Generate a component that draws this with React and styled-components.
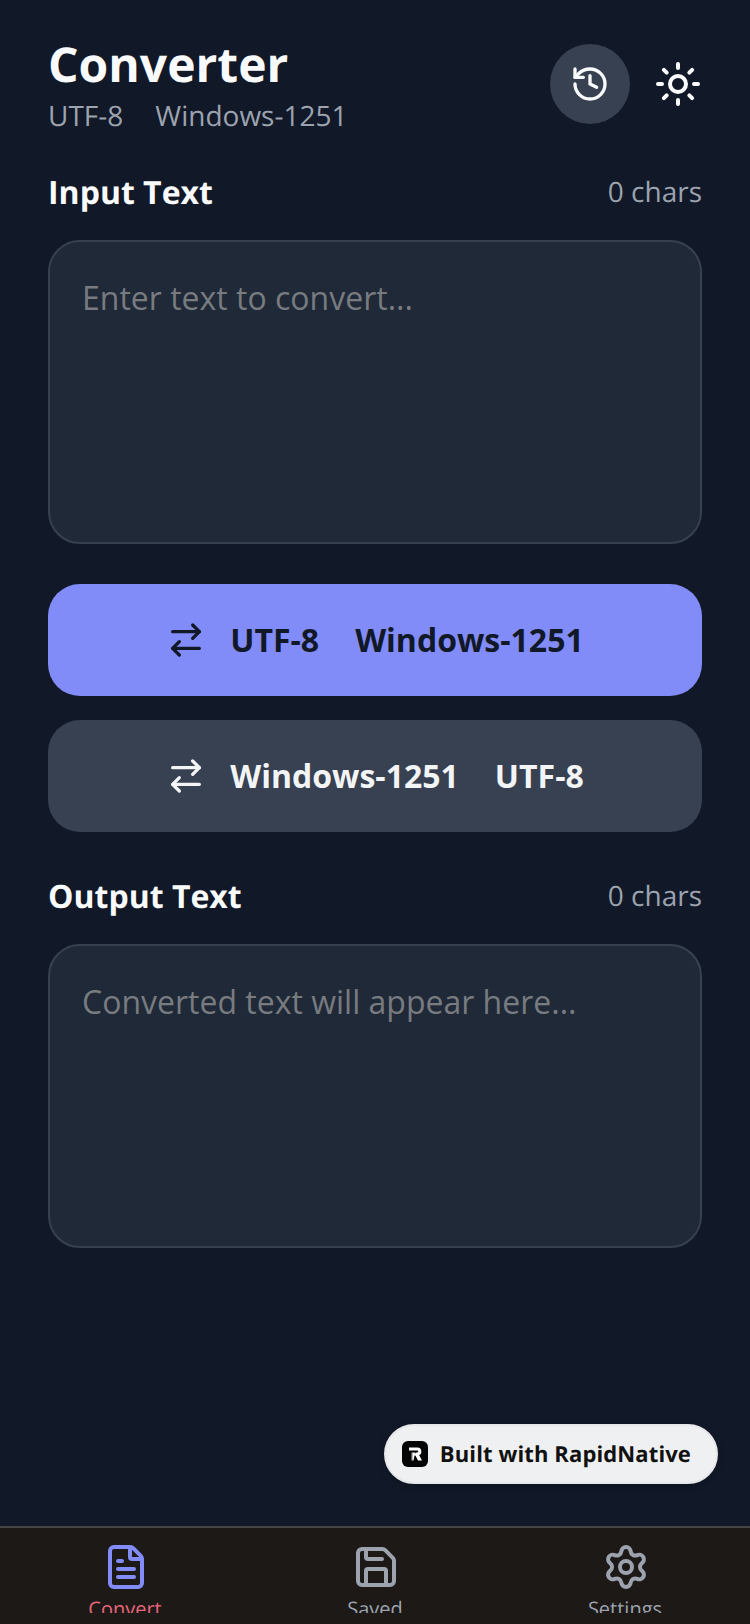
import React from 'react';
import styled, { createGlobalStyle } from 'styled-components';
import { ArrowRightLeft, FileText, History, Save, Settings, Sun } from 'lucide-react';

const GlobalStyle = createGlobalStyle`
    * {
        box-sizing: border-box;
    }
    html, body {
        margin: 0;
        padding: 0;
        background: #111827;
    }
    body {
        font-family: 'Open Sans', 'Noto Sans', sans-serif;
        text-rendering: geometricPrecision;
    }
`;

const App = () => {
    return (
        <Page>
            <GlobalStyle />
            <Main>
                <Header>
                    <div>
                        <Title>Converter</Title>
                        <Subtitle>UTF-8<Sep />Windows-1251</Subtitle>
                    </div>
                    <HeaderActions>
                        <RoundButton aria-label='History'>
                            <History size={40} />
                        </RoundButton>
                        <IconButton aria-label='Theme'>
                            <Sun size={48} />
                        </IconButton>
                    </HeaderActions>
                </Header>

                <SectionHead>
                    <SectionTitle>Input Text</SectionTitle>
                    <Count>0 chars</Count>
                </SectionHead>
                <TextBox placeholder='Enter text to convert...' />

                <ConvertButton $primary>
                    <ArrowRightLeft size={40} />
                    <ButtonText>UTF-8<ButtonSep />Windows-1251</ButtonText>
                </ConvertButton>
                <ConvertButton>
                    <ArrowRightLeft size={40} />
                    <ButtonText>Windows-1251<ButtonSep />UTF-8</ButtonText>
                </ConvertButton>

                <SectionHead $output>
                    <SectionTitle>Output Text</SectionTitle>
                    <Count>0 chars</Count>
                </SectionHead>
                <TextBox placeholder='Converted text will appear here...' readOnly />
            </Main>

            <Badge>
                <BadgeLogo viewBox='0 0 26 26'>
                    <defs>
                        <linearGradient id='rFade' x1='0' y1='0' x2='1' y2='0'>
                            <stop offset='0' stopColor='#fff' stopOpacity='0.15' />
                            <stop offset='0.55' stopColor='#fff' />
                        </linearGradient>
                    </defs>
                    <rect width='26' height='26' rx='6' fill='#050505' />
                    <path
                        d='M7 6.5h8.5a4 4 0 0 1 1.6 7.6L20 19.5h-4l-2.6-5H11l3-3h1.2a1 1 0 0 0 0-2H7z'
                        fill='#fff'
                    />
                    <path d='M9 11.5h4l-1.5 8H9z' fill='url(#rFade)' />
                </BadgeLogo>
                Built with RapidNative
            </Badge>

            <TabBar>
                <Tab $active>
                    <TabIcon as={FileText} size={48} />
                    <TabLabel $active>Convert</TabLabel>
                </Tab>
                <Tab>
                    <TabIcon as={Save} size={48} />
                    <TabLabel>Saved</TabLabel>
                </Tab>
                <Tab>
                    <TabIcon as={Settings} size={48} />
                    <TabLabel>Settings</TabLabel>
                </Tab>
            </TabBar>
        </Page>
    );
};

export default App;


const Page = styled.div`
    position: relative;
    width: 750px;
    height: 1624px;
    overflow: hidden;
    display: flex;
    flex-direction: column;
    background: #111827;
`;

const Main = styled.main`
    flex: 1;
    padding: 44px 48px 0;
`;

const Header = styled.header`
    display: flex;
    justify-content: space-between;
    align-items: flex-start;
    height: 124px;
`;

const Title = styled.h1`
    margin: -3px 0 0;
    font-size: 48px;
    line-height: 48px;
    font-weight: 700;
    color: #f9fafb;
`;

const Subtitle = styled.div`
    margin-top: 7px;
    font-size: 28px;
    line-height: 40px;
    color: #9ca3af;
`;

const Sep = styled.span`
    display: inline-block;
    width: 32px;
`;

const ButtonSep = styled.span`
    display: inline-block;
    width: 36px;
`;

const HeaderActions = styled.div`
    display: flex;
    align-items: center;
    gap: 24px;
`;

const RoundButton = styled.button`
    width: 80px;
    height: 80px;
    border: 0;
    padding: 0;
    border-radius: 50%;
    background: #374151;
    color: #f9fafb;
    display: flex;
    align-items: center;
    justify-content: center;
`;

const IconButton = styled.button`
    width: 48px;
    height: 48px;
    border: 0;
    padding: 0;
    background: transparent;
    color: #f9fafb;
    display: flex;
`;

const SectionHead = styled.div`
    display: flex;
    justify-content: space-between;
    align-items: center;
    height: 48px;
    margin-top: ${(p) => (p.$output ? '40px' : '0')};
    margin-bottom: 24px;
`;

const SectionTitle = styled.h2`
    margin: 0;
    font-size: 32px;
    font-weight: 700;
    color: #f9fafb;
`;

const Count = styled.span`
    font-size: 28px;
    color: #9ca3af;
`;

const TextBox = styled.textarea`
    display: block;
    width: 100%;
    height: 304px;
    padding: 34px 32px 32px;
    border: 2px solid #374151;
    border-radius: 32px;
    background: #1f2937;
    color: #f9fafb;
    font-family: inherit;
    font-size: 32px;
    line-height: 44px;
    resize: none;
    outline: none;

    &::placeholder {
        color: #787b80;
        opacity: 1;
    }
`;

const ConvertButton = styled.button`
    width: 100%;
    height: 112px;
    margin-top: ${(p) => (p.$primary ? '40px' : '24px')};
    border: 0;
    border-radius: 32px;
    display: flex;
    align-items: center;
    justify-content: center;
    gap: 24px;
    background: ${(p) => (p.$primary ? '#818cf8' : '#374151')};
    color: ${(p) => (p.$primary ? '#111827' : '#f3f4f6')};
    font-family: inherit;
    font-size: 32px;
    font-weight: 700;
`;

const ButtonText = styled.span`
    margin-top: -2px;
`;

const Badge = styled.div`
    position: absolute;
    right: 32px;
    top: 1424px;
    height: 60px;
    padding: 0 25px 0 16px;
    display: flex;
    align-items: center;
    gap: 12px;
    border: 2px solid #e5e7eb;
    border-radius: 30px;
    background: #eff0f2;
    color: #111;
    font-size: 22px;
    font-weight: 700;
    letter-spacing: 0.12px;
    box-shadow: 0 2px 8px rgba(0, 0, 0, 0.2);
`;

const BadgeLogo = styled.svg`
    width: 26px;
    height: 26px;
`;

const TabBar = styled.nav`
    height: 98px;
    border-top: 2px solid #444444;
    background: #1c1917;
    display: flex;
`;

const Tab = styled.div`
    flex: 1;
    height: 85px;
    padding-top: 15px;
    overflow: hidden;
    display: flex;
    flex-direction: column;
    align-items: center;
    gap: 4px;
    color: ${(p) => (p.$active ? '#818cf8' : '#9ca3af')};
`;

const TabIcon = styled.svg`
    flex: none;
    margin-left: 2px;
`;

const TabLabel = styled.span`
    font-size: 20px;
    line-height: 28px;
    color: ${(p) => (p.$active ? '#e8667a' : '#9ca3af')};
`;
